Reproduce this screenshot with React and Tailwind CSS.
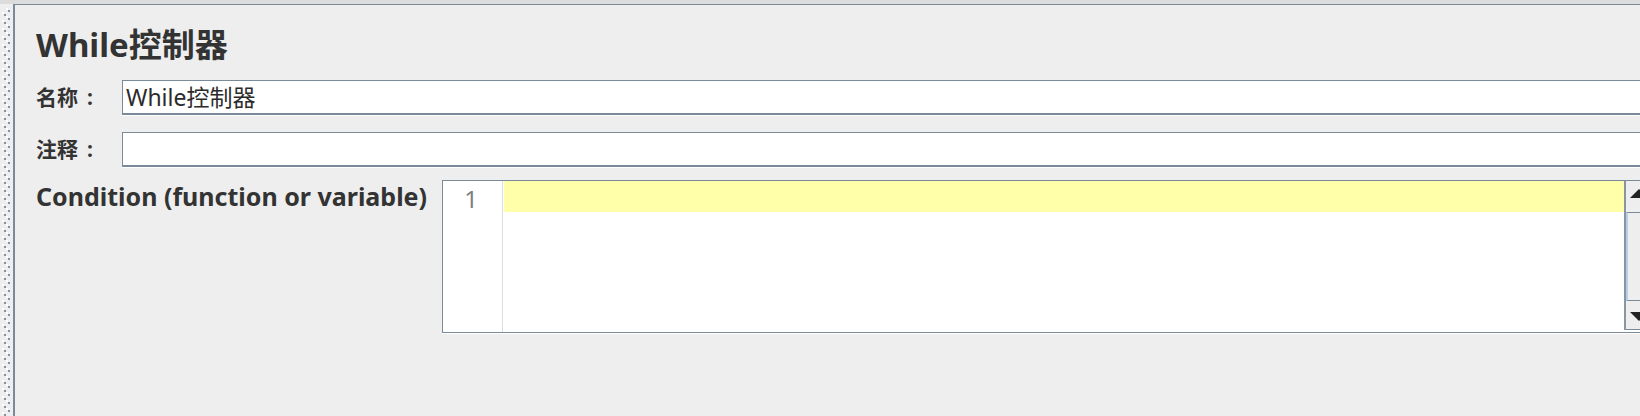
import React from "react";

const FONT = "font-['Noto_Sans','Noto_Sans_CJK_SC',sans-serif]";

function Splitter() {
  return (
    <svg width="13" className="block shrink-0 h-full" aria-hidden="true">
      <defs>
        <pattern id="grip" x="0" y="2" width="13" height="8" patternUnits="userSpaceOnUse">
          <rect x="4" y="0" width="2" height="2" fill="#8595a5" />
          <rect x="6" y="2" width="2" height="2" fill="#ffffff" />
          <rect x="8" y="4" width="2" height="2" fill="#8595a5" />
          <rect x="2" y="6" width="2" height="2" fill="#ffffff" />
        </pattern>
      </defs>
      <rect x="0" y="4" width="13" height="100%" fill="url(#grip)" />
    </svg>
  );
}

function Field({ value }) {
  return (
    <div className="flex-1 -mr-[6px] h-[35px] flex items-center pl-[3px] bg-white border-t border-l border-b-2 border-[#7a8a99] shadow-[0_1px_0_#ffffff] text-[23px] leading-none text-[#2b2b2b]">
      {value}
    </div>
  );
}

function Row({ label, value, className = "" }) {
  return (
    <div className={`flex items-center ${className}`}>
      <div className="w-[86px] shrink-0 text-[21px] font-bold leading-none whitespace-nowrap">
        {label}
        <span className="ml-[9px]">:</span>
      </div>
      <Field value={value} />
    </div>
  );
}

function Arrow({ up }) {
  return (
    <svg width="18" height="9" viewBox="0 0 18 9" aria-hidden="true">
      <polygon points={up ? "0,9 9,0 18,9" : "0,0 18,0 9,9"} fill="#222222" />
    </svg>
  );
}

function Scrollbar() {
  return (
    <div className="w-[28px] h-[149px] shrink-0 flex flex-col border-l-2 border-[#8796a5] bg-[#eeeeee]">
      <div className="h-[31px] flex items-start justify-center pt-[8px]">
        <Arrow up />
      </div>
      <div className="h-[89px] border-t border-b border-[#7a8a99] border-l-2 border-l-[#b8cfe5] bg-[#eeeeee]" />
      <div className="h-[29px] flex items-start justify-center pt-[11px] border-b border-[#7a8a99]">
        <Arrow />
      </div>
    </div>
  );
}

export default function App() {
  return (
    <div className={`w-[1640px] h-[416px] overflow-hidden flex flex-col bg-[#eeeeee] text-[#333333] ${FONT}`}>
      <div className="h-[4px] shrink-0 bg-[#dcdcdc]" />
      <div className="flex flex-1 min-h-0">
        <Splitter />
        <div className="flex-1 min-w-0 flex flex-col border-t border-l-2 border-[#7a8a99] pl-[21px]">
          <h1 className="mt-[23px] text-[33px] font-bold leading-none">While控制器</h1>

          <Row label="名称" value="While控制器" className="mt-[19px]" />
          <Row label="注释" value="" className="mt-[17px]" />

          <div className="flex mt-[13px]">
            <div className="w-[406px] shrink-0 pt-[4px] text-[25px] font-bold leading-none whitespace-nowrap">
              Condition (function or variable)
            </div>
            <div className="flex-1 -mr-[12px] h-[153px] flex items-start bg-white border-t border-l border-b border-[#7a8a99] shadow-[0_1px_0_#ffffff]">
              <div className="w-[60px] h-full shrink-0 border-r border-[#dddddd] text-right pr-[24px] pt-[6px] text-[24px] leading-none text-[#808080]">
                1
              </div>
              <div className="flex-1 pl-[1px]">
                <div className="h-[31px] bg-[#ffffaa]" />
              </div>
              <Scrollbar />
            </div>
          </div>
        </div>
      </div>
    </div>
  );
}
